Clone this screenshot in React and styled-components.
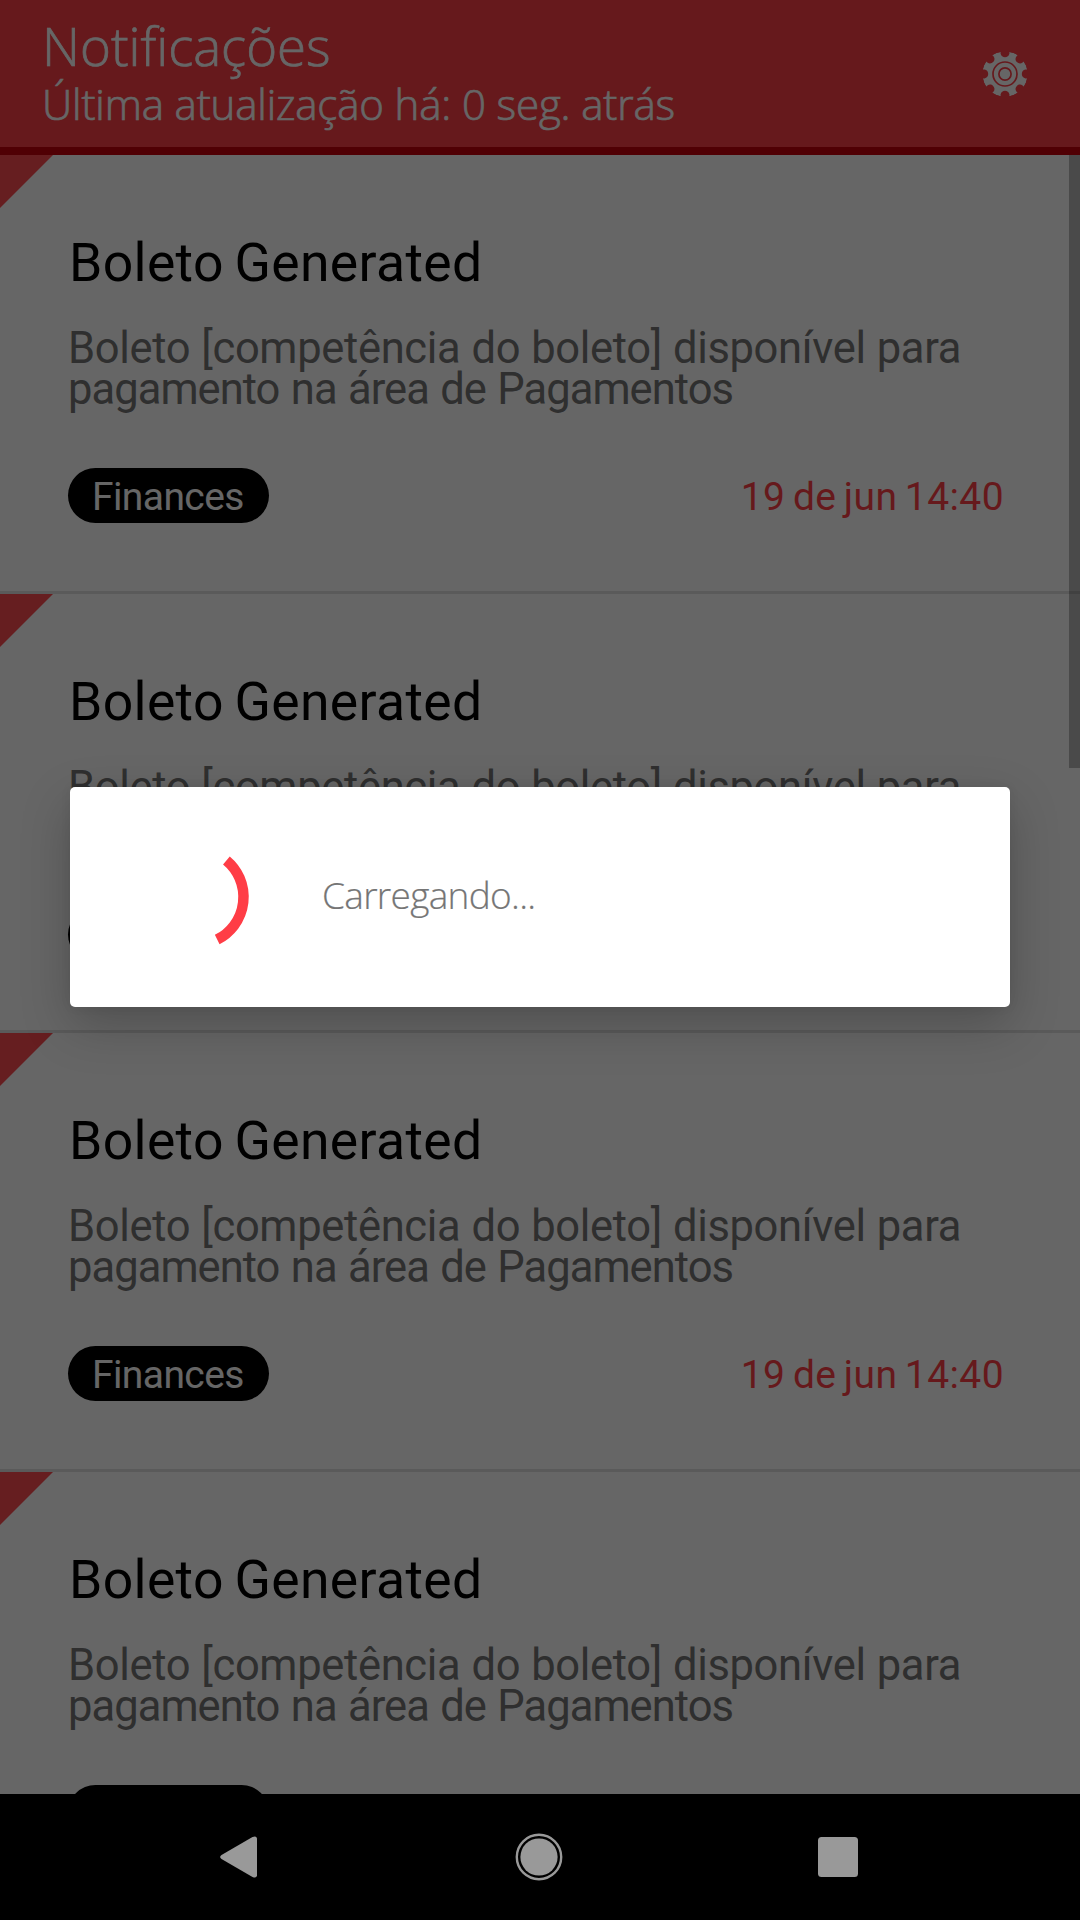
import React from "react";
import styled, { createGlobalStyle } from "styled-components";

const GlobalStyle = createGlobalStyle`
  html, body { margin: 0; padding: 0; background: #000; }
  *, *::before, *::after { box-sizing: border-box; }
`;

const Screen = styled.div`
  position: relative;
  display: flex;
  flex-direction: column;
  width: 1080px;
  height: 1920px;
  overflow: hidden;
  background: #fff;
  font-family: Roboto, sans-serif;
`;

const Header = styled.header`
  display: flex;
  flex: none;
  align-items: flex-start;
  justify-content: space-between;
  height: 155px;
  padding: 16px 52px 0 42px;
  background: #ff3f48;
  border-bottom: 8px solid #c8000a;
  color: #fff;
  font-family: "Open Sans", sans-serif;
  white-space: nowrap;
  -webkit-text-stroke: 0.7px #fff;
`;

const Title = styled.h1`
  margin: 0;
  font-size: 52.7px;
  font-weight: 300;
  line-height: 60px;
`;

const Subtitle = styled.p`
  margin: 3px 0 0;
  font-size: 42px;
  font-weight: 300;
  line-height: 50px;
  letter-spacing: -0.14px;
`;

const SettingsButton = styled.button`
  display: flex;
  margin: 35px 0 0;
  padding: 0;
  border: 0;
  background: none;
`;

const ListArea = styled.main`
  position: relative;
  flex: 1;
  min-height: 0;
  overflow: hidden;
`;

const ScrollThumb = styled.div`
  position: absolute;
  top: 0;
  right: 0;
  width: 11px;
  height: 613px;
  background: rgba(0, 0, 0, 0.28);
`;

const Card = styled.article`
  position: relative;
  display: flex;
  flex-direction: column;
  height: 439px;
  padding: 78px 76px 0 68px;
  border-bottom: 3px solid #e2e2e2;
`;

const UnreadCorner = styled.span`
  position: absolute;
  top: 0;
  left: 0;
  width: 53px;
  height: 53px;
  background: #ff4c50;
  clip-path: polygon(0 0, 100% 0, 0 100%);
`;

const CardTitle = styled.h2`
  margin: 0;
  padding-left: 1px;
  color: #000;
  font-size: 53.5px;
  font-weight: 400;
  line-height: 60px;
  letter-spacing: 0.35px;
  word-spacing: -3px;
`;

const Message = styled.p`
  margin: 35px 0 0;
  color: #757575;
  font-size: 43.5px;
  line-height: 41px;
  white-space: nowrap;
`;

const Line = styled.span`
  display: block;
  letter-spacing: ${(p) => p.$tracking}px;
  word-spacing: ${(p) => p.$wordGap}px;
`;

const CardFooter = styled.footer`
  display: flex;
  align-items: center;
  justify-content: space-between;
  height: 55px;
  margin-top: 58px;
  font-size: 39px;
  line-height: 55px;
  white-space: nowrap;
`;

const Tag = styled.span`
  width: 201px;
  height: 55px;
  padding: 2px 0 0 24px;
  border-radius: 28px;
  background: #000;
  color: #fff;
  letter-spacing: -0.6px;
`;

const Time = styled.time`
  padding-top: 3px;
  color: #ff3f48;
  letter-spacing: 0.4px;
  word-spacing: -2.6px;
`;

const Scrim = styled.div`
  position: absolute;
  inset: 0;
  display: flex;
  justify-content: center;
  align-items: flex-start;
  padding-top: 787px;
  background: rgba(0, 0, 0, 0.6);
`;

const Dialog = styled.section`
  display: flex;
  align-items: center;
  width: 940px;
  height: 220px;
  padding-left: 63px;
  border-radius: 5px;
  background: #fff;
  box-shadow: 0 18px 50px rgba(0, 0, 0, 0.22), 0 0 12px rgba(0, 0, 0, 0.06);
`;

const DialogText = styled.p`
  margin: 0 0 0 63px;
  padding-bottom: 5px;
  color: #757575;
  font-family: "Open Sans", sans-serif;
  font-size: 37px;
  font-weight: 300;
  letter-spacing: -0.7px;
  -webkit-text-stroke: 0.2px #757575;
`;

const NavBar = styled.nav`
  position: relative;
  display: grid;
  grid-template-columns: 40px 48px 42px;
  justify-content: space-between;
  align-items: center;
  flex: none;
  height: 126px;
  padding: 0 221px 0 218px;
  background: #000;
`;

const HomeButton = styled.span`
  display: flex;
  margin: 0 -1px 1px 1px;
`;

const gearAngles = [0, 45, 90, 135, 180, 225, 270, 315];

function GearIcon() {
  return (
    <svg width="46" height="46" viewBox="-23 -23 46 46">
      <mask id="valleys" maskUnits="userSpaceOnUse" x="-23" y="-23" width="46" height="46">
        <circle r="22.6" fill="#fff" />
        {gearAngles.map((angle) => (
          <path
            key={angle}
            transform={`rotate(${angle})`}
            d="M-4.4 -24V-20.5C-4 -18 -2 -16.8 0 -16.8S4 -18 4.4 -20.5V-24Z"
            fill="#000"
          />
        ))}
        <circle r="12" fill="none" stroke="#000" strokeWidth="1.7" />
        <circle r="6.1" fill="none" stroke="#000" strokeWidth="1.7" />
      </mask>
      <circle r="22.6" fill="#fff" mask="url(#valleys)" />
    </svg>
  );
}

function Spinner() {
  return (
    <svg width="126" height="126" viewBox="-63 -63 126 126">
      <path
        d="M30.4 -36.5A47.5 47.5 0 0 1 21.2 42.5"
        fill="none"
        stroke="#ff3d46"
        strokeWidth="10.5"
      />
    </svg>
  );
}

function BackIcon() {
  return (
    <svg width="40" height="46" viewBox="0 0 40 46">
      <path
        d="M3.5 21L34.5 3Q38.5 1.3 39 4.5V41.5Q38.5 44.7 34.5 43L3.5 25Q0.8 23 3.5 21Z"
        fill="#999"
      />
    </svg>
  );
}

function HomeIcon() {
  return (
    <svg width="48" height="48" viewBox="-24 -24 48 48">
      <circle r="22.2" fill="none" stroke="#999" strokeWidth="2.4" />
      <circle r="18.6" fill="#999" />
    </svg>
  );
}

function RecentsIcon() {
  return (
    <svg width="42" height="42" viewBox="0 0 42 42">
      <rect x="1" y="1" width="40" height="40" rx="3.5" fill="#999" />
    </svg>
  );
}

const notification = {
  title: "Boleto Generated",
  lines: [
    { text: "Boleto [competência do boleto] disponível para", tracking: -0.33, wordGap: 0.6 },
    { text: "pagamento na área de Pagamentos", tracking: -0.95, wordGap: 1.5 },
  ],
  tag: "Finances",
  time: "19 de jun 14:40",
};
const notifications = Array.from({ length: 4 }, () => notification);

function NotificationCard({ title, lines, tag, time }) {
  return (
    <Card>
      <UnreadCorner />
      <CardTitle>{title}</CardTitle>
      <Message>
        {lines.map((line) => (
          <Line key={line.text} $tracking={line.tracking} $wordGap={line.wordGap}>
            {line.text}
          </Line>
        ))}
      </Message>
      <CardFooter>
        <Tag>{tag}</Tag>
        <Time>{time}</Time>
      </CardFooter>
    </Card>
  );
}

export default function App() {
  return (
    <>
      <GlobalStyle />
      <Screen>
        <Header>
          <div>
            <Title>Notificações</Title>
            <Subtitle>Última atualização há: 0 seg. atrás</Subtitle>
          </div>
          <SettingsButton aria-label="Configurações">
            <GearIcon />
          </SettingsButton>
        </Header>
        <ListArea>
          {notifications.map((item, i) => (
            <NotificationCard key={i} {...item} />
          ))}
          <ScrollThumb />
        </ListArea>
        <Scrim>
          <Dialog>
            <Spinner />
            <DialogText>Carregando...</DialogText>
          </Dialog>
        </Scrim>
        <NavBar>
          <BackIcon />
          <HomeButton>
            <HomeIcon />
          </HomeButton>
          <RecentsIcon />
        </NavBar>
      </Screen>
    </>
  );
}
